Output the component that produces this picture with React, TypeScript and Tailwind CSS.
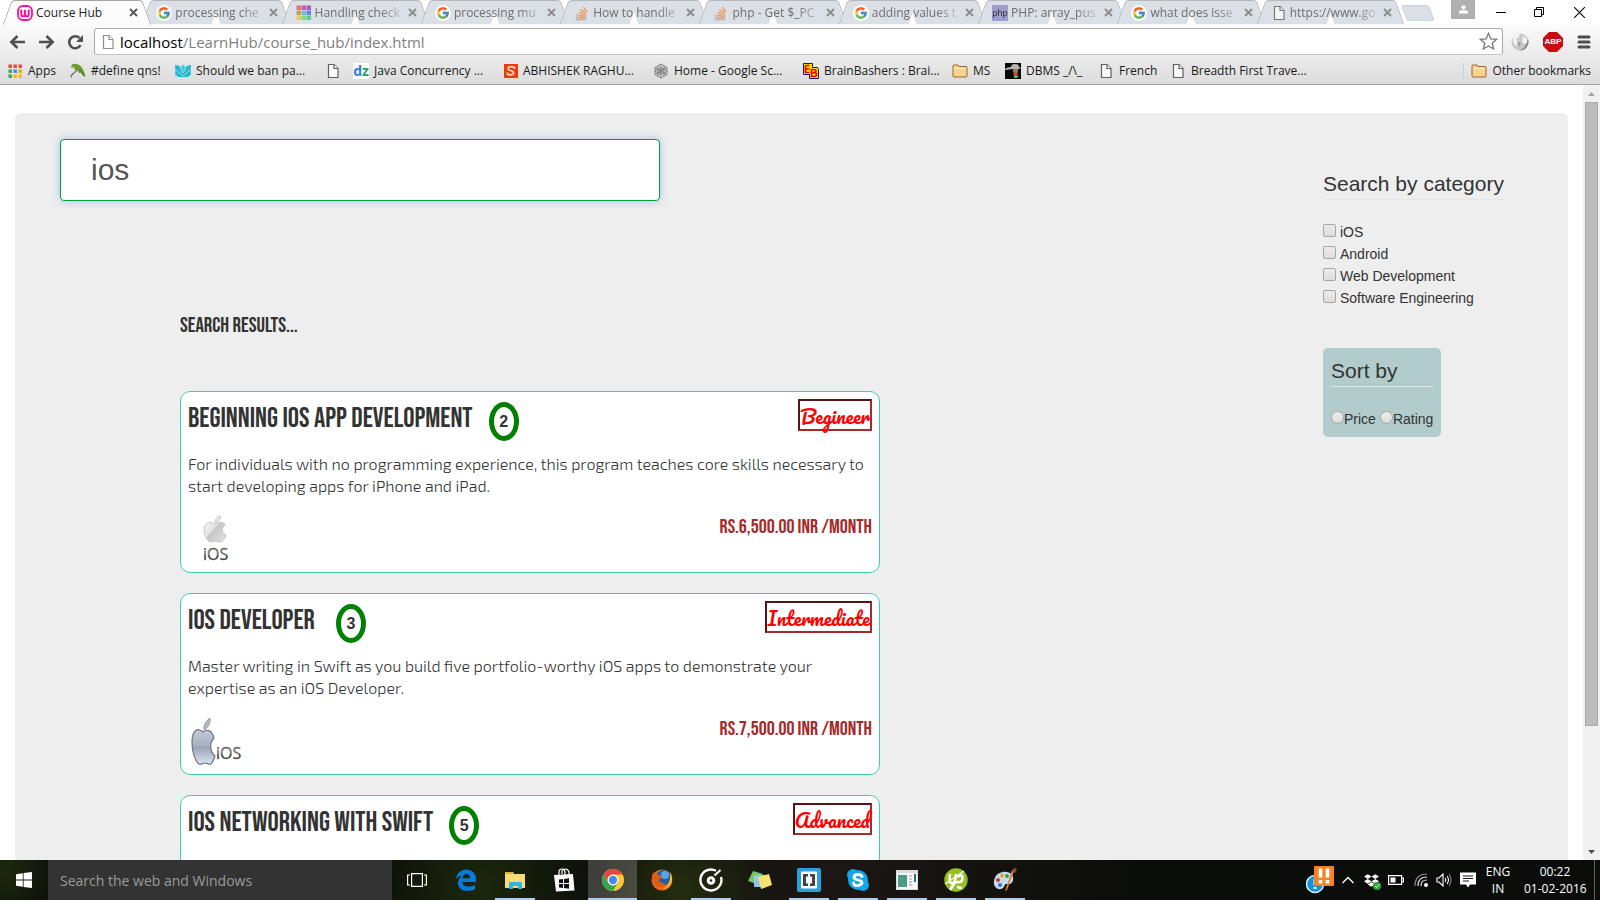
import { useState } from "react";
import type { ReactNode } from "react";
import { FcGoogle } from "react-icons/fc";
import { FaApple, FaDropbox } from "react-icons/fa";

/* ---------- small icons ---------- */

const Doc = () => (
  <svg viewBox="0 0 16 16" className="size-4 shrink-0" fill="#fbfbfb" stroke="#5f5f5f" strokeWidth="1.2">
    <path d="M3.500 1.500h5.500l4 4v9h-9.500z" />
    <path d="M9 1.500v4h4" />
  </svg>
);

const GoogleIcon = () => (
  <span className="flex size-4 shrink-0 items-center justify-center rounded-full bg-white">
    <FcGoogle className="size-[14px]" />
  </span>
);

const StackIcon = () => (
  <svg viewBox="0 0 16 16" className="size-4 shrink-0" fill="none">
    <path d="M2.500 9.500v5h9v-5" stroke="#a8a8a8" strokeWidth="1.300" />
    <path d="M4 12.500h6.500M4.200 10.300l6.400.7M4.900 7.500l6.200 1.900M6.500 4.600l5.500 3.500M9.300 2l3.900 5.200" stroke="#f28a40" strokeWidth="1.400" />
  </svg>
);

const GRID = ["#e25f55", "#c8408f", "#8f3fc9", "#c98b3c", "#5ab4d6", "#4f6fe0", "#f0c63e", "#62dc62", "#3cc48a"];
const APPS = ["#ea4335", "#ea4335", "#ea4335", "#34a853", "#4285f4", "#f5a300", "#34a853", "#fbbc05", "#fbbc05"];

const GridIcon = ({ colors, size }: { colors: string[]; size: number }) => (
  <svg viewBox="0 0 15 15" className="size-[15px] shrink-0">
    {colors.map((c, i) => (
      <rect key={i} x={(i % 3) * 5 + 0.5} y={Math.floor(i / 3) * 5 + 0.5} width={size} height={size} fill={c} />
    ))}
  </svg>
);

const CourseIcon = () => (
  <svg viewBox="0 0 16 16" className="size-4 shrink-0">
    <rect x="1" y="1" width="14" height="14" rx="5" fill="#fff" stroke="#f7129b" strokeWidth="1.800" />
    <path d="M4.300 4.500v5a1.800 1.800 0 0 0 3.700 0V5v4.500a1.800 1.800 0 0 0 3.700 0v-5" fill="none" stroke="#f7129b" strokeWidth="2" />
  </svg>
);

const PhpIcon = () => (
  <span className="flex size-4 shrink-0 items-center justify-center bg-[#9090cc] font-['Liberation_Sans',sans-serif] text-[9px] leading-4 text-black">php</span>
);

const Folder = () => (
  <svg viewBox="0 0 16 16" className="size-4 shrink-0">
    <path d="M1 4.500V3a1 1 0 0 1 1-1h4l1 1.500h7a1 1 0 0 1 1 1V13a1 1 0 0 1-1 1H2a1 1 0 0 1-1-1z" fill="#fbd38a" stroke="#9a6530" />
    <path d="M2 5.500h12" stroke="#fff0c4" />
  </svg>
);

const Umbrella = () => (
  <svg viewBox="0 0 17 16" className="size-4 shrink-0">
    <path d="M2 1C8-1 14 2 16.500 14l-3-1-1-3.500-3 .5-1.500-3L5 7 4.500 4 1 4.500z" fill="#6e9e2a" />
    <path d="M9 5l7.500 9-4-3z" fill="#35611c" />
    <path d="M8 6.500L1.500 12.500q-1 1.500.5 2" fill="none" stroke="#666" strokeWidth="1.200" />
  </svg>
);

const Lotus = () => (
  <svg viewBox="0 0 16 16" className="size-4 shrink-0" fill="#23b8cf">
    <path d="M0 2c3 0 5 1 8 4 3-3 5-4 8-4-.5 5-.5 8 0 10-2 0-2 2-4 2H4c-2 0-2-2-4-2 .5-2 .5-5 0-10z" />
    <path d="M8 1l3 4-3 5-3-5z" fill="#41cde0" stroke="#e3e3e3" strokeWidth=".600" />
    <path d="M1 7l7 6 7-6" fill="none" stroke="#e3e3e3" strokeWidth=".700" />
  </svg>
);

const Dz = () => (
  <span className="flex size-4 shrink-0 items-center justify-center bg-white text-[14px] font-bold leading-4 text-[#2a7de1]">
    d<span className="text-[#2aa36b]">z</span>
  </span>
);

const SIcon = () => (
  <svg viewBox="0 0 14 14" className="size-[14px] shrink-0">
    <rect width="14" height="14" fill="#f13a0c" />
    <path d="M10.500 5V3.500Q7 2 4.500 3.300q-1 2.200 2 3.200l2 .7q2 1.300.5 3Q6 11.500 3.500 10V8.500" fill="none" stroke="#ffd9c4" strokeWidth="1.800" />
  </svg>
);

const Hex = () => (
  <svg viewBox="0 0 16 16" className="size-4 shrink-0" fill="none" stroke="#777" strokeWidth=".900">
    <path d="M8 1l6 3.500v7L8 15l-6-3.500v-7z" />
    <path d="M8 1v14M2 4.500l12 7M14 4.500l-12 7M5 2.700v10.600M11 2.700v10.600M2 8l6-4 6 4-6 4z" />
    <circle cx="8" cy="8" r="2" />
  </svg>
);

const Brain = () => (
  <svg viewBox="0 0 16 16" className="size-4 shrink-0">
    <path d="M.500.500h9v4h5l1 2v9h-9v-4h-6z" fill="#ffe600" stroke="#0d2178" />
    <path d="M2.500 2.500v7h4M2.500 2.500h4M2.500 6h4M8.500 6.500v7h3q2 0 2-2t-2-1.800q1.500 0 1.500-1.600t-2-1.600zM8.500 9.700h3" fill="none" stroke="#f00000" strokeWidth="1.700" />
  </svg>
);

const Dbms = () => (
  <svg viewBox="0 0 16 16" className="size-4 shrink-0">
    <rect width="16" height="16" fill="#080808" />
    <path d="M0 6q2-2 6-2 0-3 4-3t4 3l2 1-2 1H8L0 7z" fill="#b4b4b4" />
    <path d="M8 6h5v3l-2 2-3-2z" fill="#a0765a" />
    <path d="M8 10h5l-1 3H9z" fill="#d8382d" />
    <path d="M9 12l5 1-2 2H9z" fill="#59b552" />
  </svg>
);

/* ---------- browser chrome ---------- */

type TabInfo = { title: string; icon: ReactNode };

const TABS: TabInfo[] = [
  { title: "Course Hub", icon: <CourseIcon /> },
  { title: "processing che", icon: <GoogleIcon /> },
  { title: "Handling check", icon: <GridIcon colors={GRID} size={4.500} /> },
  { title: "processing mu", icon: <GoogleIcon /> },
  { title: "How to handle", icon: <StackIcon /> },
  { title: "php - Get $_PC", icon: <StackIcon /> },
  { title: "adding values t", icon: <GoogleIcon /> },
  { title: "PHP: array_pus", icon: <PhpIcon /> },
  { title: "what does isse", icon: <GoogleIcon /> },
  { title: "https://www.go", icon: <Doc /> },
];

function Tab({ tab, active }: { tab: TabInfo; active: boolean }) {
  const tone = active ? "bg-[#fcfcfc] border-[#a4a4a4]" : "bg-[#dbdfe6] border-[#b4b7bb]";
  return (
    <div className={active ? "relative z-10 h-[25px] min-w-0 flex-1" : "relative h-6 min-w-0 flex-1"}>
      <span className={`absolute inset-y-0 left-0 w-1/2 origin-center -skew-x-[20deg] rounded-tl-[4px] border-l border-t ${tone}`} />
      <span className={`absolute inset-y-0 right-0 w-1/2 origin-center skew-x-[20deg] rounded-tr-[4px] border-r border-t ${tone}`} />
      <div className="relative flex h-6 items-center gap-[3px] pl-[10px] pr-2 pt-px">
        <span className={active ? "flex w-4" : "flex w-4 opacity-80"}>{tab.icon}</span>
        <a
          href="#tab"
          className={
            active
              ? "min-w-0 flex-1 whitespace-nowrap text-[#222]"
              : "min-w-0 flex-1 whitespace-nowrap text-[#6e6e6e] [mask-image:linear-gradient(to_right,#000_72%,#0003_96%)]"
          }
        >
          {tab.title}
        </a>
        <button aria-label={`Close ${tab.title}`} className="flex size-[9px] items-center">
          <svg viewBox="0 0 9 9" className="size-[9px]" stroke={active ? "#555" : "#8b8b8b"} strokeWidth="1.800">
            <path d="M1 1l7 7M8 1l-7 7" />
          </svg>
        </button>
      </div>
    </div>
  );
}

function TabStrip() {
  return (
    <div className="flex h-6 shrink-0 bg-white pl-[7px] shadow-[0_1px_0_#9a9a9a]">
      <div className="flex w-[1393px] min-w-0">
        {TABS.map((t, i) => (
          <Tab key={i} tab={t} active={i === 0} />
        ))}
      </div>
      <button aria-label="New tab" className="ml-1 mt-[5px] h-4 w-[28px] skew-x-[20deg] rounded-[3px] border border-[#cfd3d8] bg-[#dbdfe6]" />
      <div className="ml-auto flex shrink-0 items-start">
        <button aria-label="Profile" className="mr-[7px] flex h-[19px] w-6 items-center justify-center bg-[#b0b0b0]">
          <svg viewBox="0 0 10 10" className="size-[9px]" fill="#fff">
            <circle cx="5" cy="2.500" r="2.300" />
            <path d="M0 9.500V8q0-2.500 5-2.500T10 8v1.500z" />
          </svg>
        </button>
        <button aria-label="Minimize" className="flex h-6 w-[38px] items-center justify-center">
          <svg viewBox="0 0 10 10" className="size-[10px]"><path d="M0 5.500h10" stroke="#000" /></svg>
        </button>
        <button aria-label="Restore" className="flex h-6 w-[38px] items-center justify-center">
          <svg viewBox="0 0 10 10" className="size-[10px]" fill="none" stroke="#000"><path d="M.5 2.500h7v7h-7zM2.500 2.500v-2h7v7h-2" /></svg>
        </button>
        <button aria-label="Close window" className="flex h-6 w-[42px] items-center justify-center">
          <svg viewBox="0 0 10 10" className="size-[11px]" stroke="#000"><path d="M0 0l10 10M10 0L0 10" /></svg>
        </button>
      </div>
    </div>
  );
}

function Toolbar() {
  return (
    <div className="flex h-[35px] items-center">
      <div className="flex w-[94px] shrink-0 items-center gap-3 pl-[9px]">
        <button aria-label="Back">
          <svg viewBox="0 0 17 14" className="h-[14px] w-[17px]" fill="none" stroke="#505050" strokeWidth="2.600"><path d="M16 7H3M8.500 1L2.300 7l6.200 6" /></svg>
        </button>
        <button aria-label="Forward">
          <svg viewBox="0 0 17 14" className="h-[14px] w-[17px]" fill="none" stroke="#505050" strokeWidth="2.600"><path d="M1 7h13M8.500 1l6.200 6-6.200 6" /></svg>
        </button>
        <button aria-label="Reload">
          <svg viewBox="0 0 17 16" className="h-4 w-[17px]"><path d="M13.500 11.200A6 6 0 1 1 12.500 4" fill="none" stroke="#505050" strokeWidth="2.600" /><path d="M16 1v7H9z" fill="#505050" /></svg>
        </button>
      </div>
      <div className="flex h-[27px] min-w-0 flex-1 items-center rounded-[3px] border border-[#a9a9a9] border-b-[#c4c4c4] bg-white pl-[5px] pr-1">
        <span className="opacity-70"><Doc /></span>
        <a href="#address" className="ml-1 flex-1 text-[15px] leading-6 text-[#808080]">
          <span className="text-black">localhost</span>/LearnHub/course_hub/index.html
        </a>
        <button aria-label="Bookmark this page">
          <svg viewBox="0 0 18 18" className="size-[19px]" fill="#fff" stroke="#777" strokeWidth="1.200"><path d="M9 1.300l2.200 5.200 5.600.4-4.300 3.700 1.400 5.500L9 13.200l-4.900 2.900 1.400-5.500L1.200 6.900l5.600-.4z" /></svg>
        </button>
      </div>
      <div className="flex shrink-0 items-center gap-[14px] pl-2 pr-[9px]">
        <button aria-label="Network extension">
          <svg viewBox="0 0 18 18" className="size-[18px]">
            <circle cx="9" cy="9" r="8.500" fill="#c9c9c9" />
            <path d="M17 6a8.500 8.500 0 0 1-9 11.500Q15 15 15 9z" fill="#8e8e8e" />
            <path d="M2 4q4-4 7-3L8 4 5 6l2 3-1 4q-5-3-4-9zM12 3l4 3v4l-3 1-2-3z" fill="#f2f2f2" />
            <path d="M6 9l4 1-2 4z" fill="#999" />
          </svg>
        </button>
        <button aria-label="AdBlock Plus" className="relative flex size-5 items-center justify-center">
          <svg viewBox="0 0 20 20" className="absolute size-5"><path d="M6 0h8l6 6v8l-6 6H6l-6-6V6z" fill="#c70d12" /></svg>
          <span className="relative font-['Liberation_Sans',sans-serif] text-[8px] font-bold leading-none text-white">ABP</span>
        </button>
        <button aria-label="Menu">
          <svg viewBox="0 0 14 14" className="size-[14px]" stroke="#4c4c4c" strokeWidth="3" strokeLinecap="round"><path d="M2 2h10M2 7h10M2 12h10" /></svg>
        </button>
      </div>
    </div>
  );
}

const BOOKMARKS: { label: string; icon: ReactNode; width: string }[] = [
  { label: "Apps", icon: <GridIcon colors={APPS} size={3.400} />, width: "w-[62px]" },
  { label: "#define qns!", icon: <Umbrella />, width: "w-[105px]" },
  { label: "Should we ban pa...", icon: <Lotus />, width: "w-[150px]" },
  { label: "", icon: <Doc />, width: "w-[28px]" },
  { label: "Java Concurrency ...", icon: <Dz />, width: "w-[151px]" },
  { label: "ABHISHEK RAGHU...", icon: <SIcon />, width: "w-[149px]" },
  { label: "Home - Google Sc...", icon: <Hex />, width: "w-[150px]" },
  { label: "BrainBashers : Brai...", icon: <Brain />, width: "w-[149px]" },
  { label: "MS", icon: <Folder />, width: "w-[53px]" },
  { label: "DBMS _/\\_", icon: <Dbms />, width: "w-[93px]" },
  { label: "French", icon: <Doc />, width: "w-[72px]" },
  { label: "Breadth First Trave...", icon: <Doc />, width: "w-[150px]" },
];

function BookmarkBar() {
  return (
    <nav className="flex h-6 items-center pl-2 pr-[9px] text-[#1a1a1a]">
      {BOOKMARKS.map((b, i) => (
        <a key={i} href="#bookmark" aria-label={b.label || "Untitled"} className={`flex shrink-0 items-center gap-[5px] whitespace-nowrap ${b.width}`}>
          {b.icon}
          {b.label}
        </a>
      ))}
      <a href="#other" className="ml-auto flex items-center gap-[5px] whitespace-nowrap border-l border-[#c9d3dc] pl-[7px]">
        <Folder />
        Other bookmarks
      </a>
    </nav>
  );
}

/* ---------- course page ---------- */

const SmallLogo = () => (
  <svg viewBox="0 0 50 54" className="ml-1 h-[54px] w-[50px]" role="img" aria-label="iOS">
    <defs>
      <linearGradient id="silver" x1="0" y1="0" x2="1" y2="1">
        <stop offset="0" stopColor="#fafafa" />
        <stop offset=".45" stopColor="#e2e2e2" />
        <stop offset=".5" stopColor="#c6c6c6" />
        <stop offset="1" stopColor="#e4e4e4" />
      </linearGradient>
      <linearGradient id="ink" x1="0" y1="0" x2="0" y2="1">
        <stop offset="0" stopColor="#444" />
        <stop offset=".5" stopColor="#888" />
        <stop offset=".6" stopColor="#222" />
        <stop offset="1" stopColor="#777" />
      </linearGradient>
    </defs>
    <FaApple size={30} x={8} y={4} style={{ fill: "url(#silver)", stroke: "#b5b5b5", strokeWidth: 12 }} />
    <text x="11" y="50" fontFamily="Open Sans, sans-serif" fontSize="16" fill="url(#ink)" stroke="#555" strokeWidth=".300">iOS</text>
  </svg>
);

const WideLogo = () => (
  <svg viewBox="0 0 60 54" className="h-[54px] w-[60px]" role="img" aria-label="iOS">
    <defs>
      <linearGradient id="steel" x1="0" y1="0" x2="0" y2="1">
        <stop offset="0" stopColor="#c3cad8" />
        <stop offset=".45" stopColor="#a9b2c4" />
        <stop offset=".5" stopColor="#98a3b8" />
        <stop offset="1" stopColor="#dde3ef" />
      </linearGradient>
    </defs>
    <path d="M15 20C10 15 4 18 4 30c0 10 3 19 7 22 2 1 4-1 6-1s4 2 6 1c2-2 3-5 4-8-5-4-6-13-1-18-2-8-7-9-11-6z" fill="url(#steel)" stroke="#6d7585" strokeWidth="1.200" />
    <path d="M16 18q-1-7 6-12 1 8-6 12z" fill="#b3bbc9" stroke="#7b8392" strokeWidth=".700" />
    <text x="28" y="47" fontFamily="Open Sans, sans-serif" fontSize="16" fill="url(#ink)" stroke="#555" strokeWidth=".300">iOS</text>
  </svg>
);

type Course = { title: string; votes: number; level: string; text?: string; price?: string; logo?: ReactNode; gap: string };

const COURSES: Course[] = [
  {
    title: "BEGINNING IOS APP DEVELOPMENT",
    votes: 2,
    level: "Begineer",
    text: "For individuals with no programming experience, this program teaches core skills necessary to start developing apps for iPhone and iPad.",
    price: "RS.6,500.00 INR /MONTH",
    logo: <SmallLogo />,
    gap: "gap-4",
  },
  {
    title: "IOS DEVELOPER",
    votes: 3,
    level: "Intermediate",
    text: "Master writing in Swift as you build five portfolio-worthy iOS apps to demonstrate your expertise as an iOS Developer.",
    price: "RS.7,500.00 INR /MONTH",
    logo: <WideLogo />,
    gap: "gap-[21px]",
  },
  { title: "IOS NETWORKING WITH SWIFT", votes: 5, level: "Advanced", gap: "gap-4" },
];

function CourseCard({ c }: { c: Course }) {
  return (
    <article className="min-h-[182px] rounded-[10px] border border-[#3fd0a9] bg-white px-[7px] pb-2 pt-[7px]">
      <header className="flex h-[45px] items-start">
        <div className={`flex items-start ${c.gap}`}>
          <h3 className="whitespace-nowrap font-['Bebas_Neue','Liberation_Sans_Narrow','Liberation_Sans',sans-serif] text-[28px] leading-10">{c.title}</h3>
          <span className="mt-[3px] flex h-[39px] w-[30px] items-center justify-center rounded-[50%] border-[5px] border-[#008000] text-[16px] font-bold leading-none">{c.votes}</span>
        </div>
        <span className="ml-auto h-8 whitespace-nowrap border-2 border-b-[#a52a2a] border-l-[#531515] border-r-[#a52a2a] border-t-[#531515] font-['Pacifico','Liberation_Serif',serif] text-[19px] leading-[30px] text-[#ff0000]">{c.level}</span>
      </header>
      {c.text && <p className="mt-[9px] font-['Exo_2','Exo','Roboto',sans-serif] text-[16px] font-light leading-[22px]">{c.text}</p>}
      {c.price && (
        <footer className="mt-[13px] flex items-start justify-between">
          {c.logo}
          <span className="font-['Bebas_Neue','Liberation_Sans_Narrow','Liberation_Sans',sans-serif] text-[20px] leading-[34px] text-[#a52a2a]">{c.price}</span>
        </footer>
      )}
    </article>
  );
}

const CATEGORIES = ["iOS", "Android", "Web Development", "Software Engineering"];

function Filters() {
  return (
    <aside className="w-[245px] shrink-0 pt-[56px] text-[14px]">
      <fieldset>
        <legend className="mb-[21px] border-b border-[#e5e5e5] text-[21px] leading-[30px]">Search by category</legend>
        {CATEGORIES.map((c) => (
          <label key={c} className="flex h-[22px] items-center gap-1">
            <input type="checkbox" className="mb-1 size-[13px] appearance-none rounded-[2px] border border-[#a6a6a6] bg-linear-to-b from-[#ececec] to-[#dcdcdc] checked:bg-[#888]" />
            {c}
          </label>
        ))}
      </fieldset>
      <fieldset className="mt-[39px] inline-block rounded-[5px] bg-[#b2cccc] p-2">
        <legend className="float-left mb-[22px] w-full border-b border-[#e5e5e5] text-[21px] leading-[30px]">Sort by</legend>
        <div className="clear-both flex h-5 gap-1">
          {["Price", "Rating"].map((s) => (
            <label key={s} className="flex items-center">
              <input type="radio" name="sort" className="mb-[3px] size-[13px] appearance-none rounded-full border border-[#a6a6a6] bg-linear-to-b from-[#ececec] to-[#dcdcdc] checked:bg-[#888]" />
              {s}
            </label>
          ))}
        </div>
      </fieldset>
    </aside>
  );
}

function Page() {
  const [query, setQuery] = useState("ios");
  return (
    <main className="flex min-h-0 flex-1 bg-white">
      <div className="min-w-0 flex-1 overflow-hidden pl-[15px] pr-[15px] pt-7">
        <div className="flex justify-between rounded-[6px] bg-[#eeeeee] pl-[45px] font-['Liberation_Sans',sans-serif] text-[#333]">
          <div className="min-w-0 pb-10 pt-[26px]">
            <input
              type="text"
              aria-label="Search courses"
              value={query}
              onChange={(e) => setQuery(e.target.value)}
              className="block h-[62px] w-[600px] rounded-[4px] border border-[#0a9c3c] bg-white px-[30px] text-[30px] text-[#555] shadow-[0_0_8px_rgba(102,175,233,0.6)] outline-none"
            />
            <section className="ml-[120px] w-[700px]">
              <h2 className="mt-[109px] font-['Bebas_Neue','Liberation_Sans_Narrow','Liberation_Sans',sans-serif] text-[21px] leading-[32px]">SEARCH RESULTS...</h2>
              <div className="mt-[49px] flex flex-col gap-5">
                {COURSES.map((c) => (
                  <CourseCard key={c.title} c={c} />
                ))}
              </div>
            </section>
          </div>
          <Filters />
        </div>
      </div>
      <div className="flex w-[17px] shrink-0 flex-col items-center bg-[#f1f1f1]">
        <svg viewBox="0 0 17 17" className="size-[17px] shrink-0"><path d="M5 11h7L8.500 7z" fill="#a3a3a3" /></svg>
        <div className="w-[13px] basis-[624px] border border-[#a8a8a8] bg-[#bcbcbc]" />
        <svg viewBox="0 0 17 17" className="mt-auto size-[17px] shrink-0"><path d="M5 7h7l-3.500 4z" fill="#505050" /></svg>
      </div>
    </main>
  );
}

/* ---------- taskbar ---------- */

const TaskView = () => (
  <svg viewBox="0 0 20 14" className="h-[14px] w-5" fill="none" stroke="#fff" strokeWidth="1.200"><path d="M4.600.600h10.800v12.800H4.600zM3 2H.600v10H3M17 2h2.400v10H17" /></svg>
);
const Edge = () => (
  <svg viewBox="0 0 22 22" className="size-[22px]" fill="#0a79d8"><path d="M1 10C2 4 6 .500 11 .500c6 0 10 4 10 9.500v3H7.500c0 3 2.500 4.600 6 4.600 2.500 0 4.500-.6 6.500-1.700v4.400c-2 1.100-4.700 1.700-7.500 1.700C6.500 22 3 18.500 3 14c0-3 1.600-5.500 4-7C4 7 2.200 8.500 1 10zm6.500-.800H15C15 6.500 13.500 5 11.500 5S8 6.500 7.500 9.200z" /></svg>
);
const Explorer = () => (
  <svg viewBox="0 0 22 19" className="h-[19px] w-[22px]"><path d="M1 1h8l1 2h11v14H1z" fill="#f9dc72" /><path d="M1 1h8l1 2H1z" fill="#e0b13c" /><path d="M5 18v-7h13v7h-4v-3H9v3z" fill="#2cb6e8" /></svg>
);
const Store = () => (
  <svg viewBox="0 0 22 24" className="h-6 w-[22px]"><path d="M6 7V4q0-3 3-3t3 3v3M9 6V3q1-2 3.500-2T16 4v3" fill="none" stroke="#fff" strokeWidth="1.200" /><path d="M1 7l19-1 1.500 16.500L3 23.500z" fill="#fff" /><path d="M6 11.500l4-.5v4H6zM11 11l5-.700V15h-5zM6 16h4v4l-4-.5zM11 16h5v4.700l-5-.700z" fill="#111" /></svg>
);
const Chrome = () => (
  <svg viewBox="0 0 22 22" className="size-[22px]">
    <circle cx="11" cy="11" r="11" fill="#fcc934" />
    <path d="M1.500 5.500A11 11 0 0 1 20.500 5.500H11a5.500 5.500 0 0 0-4.800 8.200z" fill="#df4a3c" />
    <path d="M1.500 5.500A11 11 0 0 0 11 22l4.800-8.300a5.500 5.500 0 0 1-9.600 0z" fill="#31a553" />
    <circle cx="11" cy="11" r="5.400" fill="#fff" /><circle cx="11" cy="11" r="4.200" fill="#4688f1" />
  </svg>
);
const Firefox = () => (
  <svg viewBox="0 0 22 22" className="size-[22px]">
    <circle cx="11" cy="11" r="10.500" fill="#e8681b" /><circle cx="12.500" cy="8.500" r="7.500" fill="#245fa6" /><circle cx="14" cy="6" r="4" fill="#5aa6dc" />
    <path d="M19 3c2.500 4 3 9 0 13-2 3-6 4-8 4 6-2 9-7 8-17z" fill="#f9c22e" />
    <path d="M2 3q1 3 4 2.500 3 0 5 3-3 1-3 3t6 3q-3 5-8 3Q-1 13 2 3z" fill="#e05a16" />
  </svg>
);
const Groove = () => (
  <svg viewBox="0 0 24 24" className="size-6" fill="none" stroke="#fff"><path d="M17 2.800A10.500 10.500 0 1 0 22 9" strokeWidth="2.400" /><circle cx="12" cy="12.500" r="2.800" strokeWidth="3" /><path d="M15.500 7.500L21.500 2" strokeWidth="2" /></svg>
);
const Notes = () => (
  <svg viewBox="0 0 24 20" className="h-5 w-6"><path d="M5 1l10 3-4 11L0 11z" fill="#77c46b" /><path d="M6 5h11v12H6z" fill="#8fc6ee" /><path d="M10 7l11-3 3 11-11 4z" fill="#f8e173" /></svg>
);
const Brackets = () => (
  <svg viewBox="0 0 24 24" className="size-6"><rect width="24" height="24" rx="2" fill="#2b9fdc" /><rect x="4" y="3.500" width="16" height="17" rx="1" fill="#fff" /><path d="M11 6H6v12h5v-2.500H9v-7h2zM13 6h5v12h-5v-2.500h2v-7h-2z" fill="#3e4446" /></svg>
);
const Skype = () => (
  <svg viewBox="0 0 24 24" className="size-6"><circle cx="12" cy="12" r="10" fill="#12a5e9" /><circle cx="7" cy="7" r="6" fill="#12a5e9" /><circle cx="17" cy="17" r="6" fill="#12a5e9" /><path d="M16 8.500Q15 6.500 12 6.500q-4 0-4 2.700 0 2 4 2.800t4 2.800-4 2.700-4.500-2.500" fill="none" stroke="#fff" strokeWidth="2.800" strokeLinecap="round" /></svg>
);
const AppWindow = () => (
  <svg viewBox="0 0 22 20" className="h-5 w-[22px]"><rect width="22" height="20" fill="#d9dde0" /><rect x="1" y="3" width="20" height="16" fill="#f8f8f8" /><rect x="2" y="5" width="9" height="12" fill="#4d9b84" /><path d="M13 6h3M13 9h3M13 12h3M13 15h3" stroke="#bbb" strokeWidth="1.500" /><rect x="18" y="4" width="2" height="8" fill="#2f6f8a" /></svg>
);
const Torrent = () => (
  <svg viewBox="0 0 24 24" className="size-6">
    <circle cx="12" cy="12" r="11.700" fill="#95c11f" />
    <path d="M6 6q-1 8 1 9t4-2l1-7M12 13L6 22M18 20l-5-1M13.500 9q5-4 5 1t-6 4" fill="none" stroke="#fff" strokeWidth="2.600" />
    <path d="M1 16L20 3" stroke="#fff" strokeWidth="1.200" />
  </svg>
);
const Paint = () => (
  <svg viewBox="0 0 24 24" className="size-6"><path d="M10 4c7-1 11 3 10 8s-5 4-7 4-1 4-5 5-8-3-7-8 3-8 9-9z" fill="#c3dcf0" /><circle cx="5" cy="12" r="2" fill="#d8352c" /><circle cx="9" cy="7.500" r="2" fill="#e99a2e" /><circle cx="14" cy="8" r="2" fill="#3f9d4a" /><circle cx="7" cy="17" r="2" fill="#3c6fc4" /><path d="M21 3l-7 19-2 1 1-3 6-18z" fill="#d68a3c" /><path d="M19 3l2-3 3 1-2 4z" fill="#87522b" /></svg>
);

const TASKS: { name: string; icon: ReactNode; state: "idle" | "open" | "focus" }[] = [
  { name: "Task view", icon: <TaskView />, state: "idle" },
  { name: "Edge", icon: <Edge />, state: "idle" },
  { name: "File Explorer", icon: <Explorer />, state: "open" },
  { name: "Store", icon: <Store />, state: "idle" },
  { name: "Chrome", icon: <Chrome />, state: "focus" },
  { name: "Firefox", icon: <Firefox />, state: "idle" },
  { name: "Groove", icon: <Groove />, state: "open" },
  { name: "Sticky Notes", icon: <Notes />, state: "idle" },
  { name: "Brackets", icon: <Brackets />, state: "open" },
  { name: "Skype", icon: <Skype />, state: "open" },
  { name: "App", icon: <AppWindow />, state: "open" },
  { name: "Torrent", icon: <Torrent />, state: "open" },
  { name: "Paint", icon: <Paint />, state: "open" },
];

const TASK_STYLE = {
  idle: "w-10 border-b-transparent",
  open: "w-10 border-b-[#a9cdf5]",
  focus: "w-full border-b-[#a9cdf5]",
};

function Tray() {
  return (
    <div className="ml-auto flex h-full shrink-0 items-center">
      <svg viewBox="0 0 28 28" className="h-7 w-7"><circle cx="9" cy="18" r="8.500" fill="#1592d6" stroke="#d8eefa" strokeWidth="1.500" /><path d="M9 13v6M9 21v2" stroke="#fff" strokeWidth="3" /><rect x="8" width="20" height="20" rx="1" fill="#f5832a" /><path d="M14.500 2.500v9M21.500 2.500v9M14.500 14v3.500M21.500 14v3.500" stroke="#fff" strokeWidth="3.600" /></svg>
      <svg viewBox="0 0 12 8" className="ml-2 h-2 w-3" fill="none" stroke="#fff" strokeWidth="1.400"><path d="M.5 7L6 1.500 11.500 7" /></svg>
      <span className="relative ml-[10px] flex text-white">
        <FaDropbox className="size-[15px]" />
        <svg viewBox="0 0 8 8" className="absolute -bottom-0.5 -right-0.5 size-2"><circle cx="4" cy="4" r="4" fill="#2fa33b" /><path d="M2 4l1.500 1.500L6 2.500" fill="none" stroke="#fff" /></svg>
      </span>
      <svg viewBox="0 0 16 10" className="ml-[9px] h-[10px] w-4"><path d="M.6.600h13v8.800H.600zM13.600 3h1.800v4h-1.800" fill="none" stroke="#fff" strokeWidth="1.200" /><rect x="2.500" y="2.500" width="5" height="5" fill="#fff" /></svg>
      <svg viewBox="0 0 14 14" className="ml-[10px] size-[14px]" fill="none" stroke="#ddd" strokeWidth="1.200"><path d="M1 13Q1 1 13 1" opacity=".6" /><path d="M4 13q0-9 9-9M7 13q0-6 6-6" /><circle cx="12" cy="12" r="1.500" fill="#fff" /></svg>
      <svg viewBox="0 0 16 14" className="ml-2 h-[14px] w-4" fill="none" stroke="#fff" strokeWidth="1.100"><path d="M1 5h2l4-4v12L3 9H1zM9 5q1.500 2 0 4M11 3q3 4 0 8" /><path d="M13 1q4 6 0 12" opacity=".5" /></svg>
      <svg viewBox="0 0 16 16" className="ml-2 size-4"><path d="M0 .500h16v12h-6L8 15.500 6 12.500H0z" fill="#fff" /><path d="M3 4h10M3 6.500h10M3 9h6" stroke="#111" /></svg>
      <div className="ml-2 w-[28px] text-center leading-[17px]">
        <div>ENG</div>
        <div>IN</div>
      </div>
      <time className="ml-3 w-[62px] whitespace-nowrap text-center leading-[17px]">
        <span className="block">00:22</span>
        <span className="block">01-02-2016</span>
      </time>
      <span className="ml-2 mr-[5px] h-full border-l border-[#5d605d]" />
    </div>
  );
}

function Taskbar() {
  return (
    <div className="flex h-10 shrink-0 bg-[#0b0d0a] bg-[radial-gradient(circle_at_4px_10px,#1d2a0c,transparent_60px),radial-gradient(circle_at_480px_30px,#1c280c,transparent_120px),radial-gradient(circle_at_680px_30px,#232e0e,transparent_90px),radial-gradient(circle_at_840px_10px,#1c1714,transparent_300px)] text-[12px] text-white">
      <button aria-label="Start" className="flex w-12 shrink-0 items-center justify-center">
        <svg viewBox="0 0 16 16" className="size-4" fill="#fff"><path d="M0 2.200l6.800-1v6.400H0zM7.600 1.100L16 0v7.600H7.600zM0 8.400h6.800v6.400l-6.800-1zM7.600 8.400H16V16l-8.400-1.100z" /></svg>
      </button>
      <input aria-label="Search the web and Windows" placeholder="Search the web and Windows" className="h-10 w-[344px] min-w-0 bg-[#333333] px-3 text-[14px] outline-none placeholder:text-[#9b9b9b]" />
      <div className="flex">
        {TASKS.map((t) => (
          <button
            key={t.name}
            aria-label={t.name}
            className={t.state === "focus" ? "flex w-[49px] items-center justify-center bg-white/20" : "flex w-[49px] items-center justify-center"}
          >
            <span className={`flex h-10 items-center justify-center border-b-2 border-t-2 border-t-transparent ${TASK_STYLE[t.state]}`}>{t.icon}</span>
          </button>
        ))}
      </div>
      <Tray />
    </div>
  );
}

export default function App() {
  return (
    <div className="flex h-screen flex-col overflow-hidden bg-white font-['Open_Sans','Noto_Sans',sans-serif] text-[12px] leading-4">
      <TabStrip />
      <div className="h-[61px] shrink-0 border-b border-[#a3a3a3] bg-linear-to-b from-[#fcfcfc] to-[#dcdcdc]">
        <Toolbar />
        <BookmarkBar />
      </div>
      <Page />
      <Taskbar />
    </div>
  );
}
